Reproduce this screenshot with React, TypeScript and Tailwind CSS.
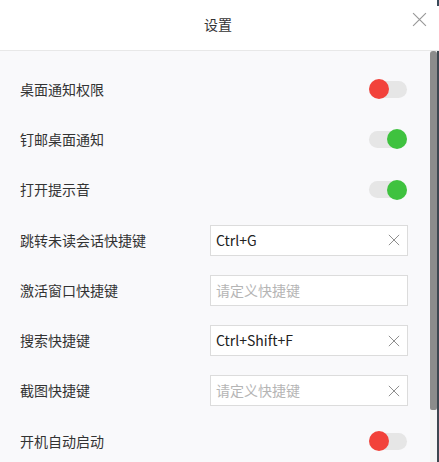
import React from "react";

type Row =
  | { label: string; kind: "toggle"; on: boolean }
  | { label: string; kind: "input"; value: string; clear: boolean };

const rows: Row[] = [
  { label: "桌面通知权限", kind: "toggle", on: false },
  { label: "钉邮桌面通知", kind: "toggle", on: true },
  { label: "打开提示音", kind: "toggle", on: true },
  { label: "跳转未读会话快捷键", kind: "input", value: "Ctrl+G", clear: true },
  { label: "激活窗口快捷键", kind: "input", value: "", clear: false },
  { label: "搜索快捷键", kind: "input", value: "Ctrl+Shift+F", clear: true },
  { label: "截图快捷键", kind: "input", value: "", clear: true },
  { label: "开机自动启动", kind: "toggle", on: false },
];

function XIcon({ size, color }: { size: number; color: string }) {
  return (
    <svg width={size} height={size} viewBox="0 0 14 14" fill="none">
      <path d="M1 1L13 13M13 1L1 13" stroke={color} strokeWidth="1.1" />
    </svg>
  );
}

function Toggle({ on }: { on: boolean }) {
  return (
    <div className="relative w-[38px] h-[17px] rounded-full bg-[#e6e6e6] mr-[1px]">
      <div
        className={
          on
            ? "absolute right-0 top-1/2 -translate-y-1/2 w-[20px] h-[20px] rounded-full bg-[#3fc23f]"
            : "absolute left-0 top-1/2 -translate-y-1/2 w-[20px] h-[20px] rounded-full bg-[#f2423b]"
        }
      />
    </div>
  );
}

export default function App() {
  return (
    <div
      className="w-[439px] h-[462px] overflow-hidden flex flex-col bg-white text-[#333]"
      style={{ fontFamily: '"Microsoft YaHei", "Noto Sans CJK SC", sans-serif' }}
    >
      <div className="h-[51px] shrink-0 flex items-center justify-center relative border-b border-[#e8e8e8] pr-[3px]">
        <span className="text-[14px] text-[#333] -mt-[1px]">设置</span>
        <div className="absolute right-[12px] top-[12px]">
          <XIcon size={15} color="#999" />
        </div>
        <div className="absolute right-0 top-0 h-[6px] w-[2px] bg-[#3a4a5a]" />
      </div>
      <div className="flex-1 flex min-h-0">
        <div className="flex-1 bg-[#f9f9fb] pt-[13px] pl-[20px] pr-[22px]">
          {rows.map((r) => (
            <div key={r.label} className="h-[50.3px] flex items-center justify-between">
              <span className="text-[14px] text-[#333]">{r.label}</span>
              {r.kind === "toggle" ? (
                <Toggle on={r.on} />
              ) : (
                <div className="w-[198px] h-[31px] bg-white border border-[#dcdcdc] flex items-center justify-between pl-[5px] pr-[7px]">
                  <span
                    className={
                      r.value
                        ? "text-[14px] text-[#222]"
                        : "text-[14px] text-[#b5b5b5]"
                    }
                  >
                    {r.value || "请定义快捷键"}
                  </span>
                  {r.clear && <XIcon size={12} color="#888" />}
                </div>
              )}
            </div>
          ))}
        </div>
        <div className="w-[9px] flex">
          <div className="w-[7px] bg-[#f4f4f4] flex flex-col">
            <div className="h-[359px] w-[7px] bg-[#8c8c8c] rounded-t-[3px] rounded-b-[2px]" />
          </div>
          <div className="w-[2px] bg-[#3d4650]" />
        </div>
      </div>
    </div>
  );
}
